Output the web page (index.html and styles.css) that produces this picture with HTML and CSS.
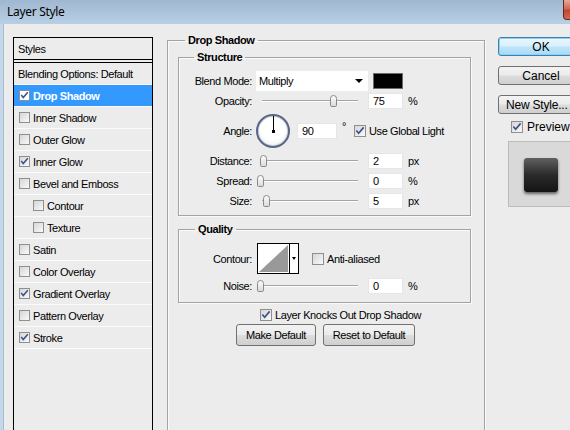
FILE: index.html
```html
<!DOCTYPE html>
<html>
<head>
<meta charset="utf-8">
<title>Layer Style</title>
<link rel="stylesheet" href="styles.css">
</head>
<body>
<div class="window">
  <div class="titlebar">
    <span class="title">Layer Style</span>
    <span class="close"></span>
  </div>
  <div class="content">
    <div class="styles-panel">
      <div class="styles-head">Styles</div>
      <ul class="style-list">
        <li class="item plain">Blending Options: Default</li>
        <li class="item selected"><span class="cb"><svg viewBox="0 0 11 11" width="9" height="9"><path d="M1.5 5 L4 8 L9.5 1.5" fill="none" stroke="#3b4f8c" stroke-width="1.8"/></svg></span>Drop Shadow</li>
        <li class="item"><span class="cb"></span>Inner Shadow</li>
        <li class="item"><span class="cb"></span>Outer Glow</li>
        <li class="item"><span class="cb"><svg viewBox="0 0 11 11" width="9" height="9"><path d="M1.5 5 L4 8 L9.5 1.5" fill="none" stroke="#3b4f8c" stroke-width="1.8"/></svg></span>Inner Glow</li>
        <li class="item"><span class="cb"></span>Bevel and Emboss</li>
        <li class="item sub"><span class="cb"></span>Contour</li>
        <li class="item sub"><span class="cb"></span>Texture</li>
        <li class="item"><span class="cb"></span>Satin</li>
        <li class="item"><span class="cb"></span>Color Overlay</li>
        <li class="item"><span class="cb"><svg viewBox="0 0 11 11" width="9" height="9"><path d="M1.5 5 L4 8 L9.5 1.5" fill="none" stroke="#3b4f8c" stroke-width="1.8"/></svg></span>Gradient Overlay</li>
        <li class="item"><span class="cb"></span>Pattern Overlay</li>
        <li class="item"><span class="cb"><svg viewBox="0 0 11 11" width="9" height="9"><path d="M1.5 5 L4 8 L9.5 1.5" fill="none" stroke="#3b4f8c" stroke-width="1.8"/></svg></span>Stroke</li>
      </ul>
    </div>

    <fieldset class="group main-group">
      <legend class="legend-main">Drop Shadow</legend>

      <fieldset class="group structure">
        <legend class="legend-structure">Structure</legend>
        <div class="row row-blend">
          <span class="lbl">Blend Mode:</span>
          <div class="select"><span>Multiply</span><span class="arrow"></span></div>
          <span class="swatch"></span>
        </div>
        <div class="row row-opacity">
          <span class="lbl">Opacity:</span>
          <div class="slider"><span class="thumb" style="left:73px"></span></div>
          <span class="field">75</span>
          <span class="unit">%</span>
        </div>
        <div class="row row-angle">
          <span class="lbl">Angle:</span>
          <div class="dial"><span class="dial-hand"></span><span class="dial-dot"></span></div>
          <span class="field field-angle">90</span>
          <span class="deg">°</span>
          <span class="cb cb-lg"><svg viewBox="0 0 11 11" width="10" height="10"><path d="M1.5 5 L4 8 L9.5 1.5" fill="none" stroke="#3b4f8c" stroke-width="1.8"/></svg></span>
          <span>Use Global Light</span>
        </div>
        <div class="row row-std">
          <span class="lbl">Distance:</span>
          <div class="slider"><span class="thumb" style="left:3px"></span></div>
          <span class="field">2</span>
          <span class="unit">px</span>
        </div>
        <div class="row row-std">
          <span class="lbl">Spread:</span>
          <div class="slider"><span class="thumb" style="left:0px"></span></div>
          <span class="field">0</span>
          <span class="unit">%</span>
        </div>
        <div class="row row-std">
          <span class="lbl">Size:</span>
          <div class="slider"><span class="thumb" style="left:6px"></span></div>
          <span class="field">5</span>
          <span class="unit">px</span>
        </div>
      </fieldset>

      <fieldset class="group quality">
        <legend class="legend-quality">Quality</legend>
        <div class="row row-contour">
          <span class="lbl">Contour:</span>
          <div class="contour">
            <svg class="contour-curve" viewBox="0 0 31 29" width="31" height="29"><polygon points="1,28 30,1 30,28" fill="#999"/></svg>
            <span class="contour-drop"><span class="arrow small"></span></span>
          </div>
          <span class="cb cb-lg cb-aa"></span>
          <span>Anti-aliased</span>
        </div>
        <div class="row row-noise">
          <span class="lbl">Noise:</span>
          <div class="slider"><span class="thumb" style="left:0px"></span></div>
          <span class="field">0</span>
          <span class="unit">%</span>
        </div>
      </fieldset>

      <div class="knock">
        <span class="cb cb-lg"><svg viewBox="0 0 11 11" width="10" height="10"><path d="M1.5 5 L4 8 L9.5 1.5" fill="none" stroke="#3b4f8c" stroke-width="1.8"/></svg></span>
        <span>Layer Knocks Out Drop Shadow</span>
      </div>
      <div class="btn-row">
        <span class="btn btn-small btn-make">Make Default</span>
        <span class="btn btn-small btn-reset">Reset to Default</span>
      </div>
    </fieldset>

    <div class="side">
      <span class="btn btn-side btn-default">OK</span>
      <span class="btn btn-side">Cancel</span>
      <span class="btn btn-side btn-new">New Style...</span>
      <div class="preview-row">
        <span class="cb cb-lg"><svg viewBox="0 0 11 11" width="10" height="10"><path d="M1.5 5 L4 8 L9.5 1.5" fill="none" stroke="#3b4f8c" stroke-width="1.8"/></svg></span>
        <span>Preview</span>
      </div>
      <div class="preview-box"><span class="preview-sq"></span></div>
    </div>
  </div>
</div>
</body>
</html>
```

FILE: styles.css
```css
* { box-sizing: border-box; }
html, body { margin: 0; padding: 0; }
body {
  width: 570px;
  height: 430px;
  overflow: hidden;
  background: #ececec;
  font-family: "Liberation Sans", Arial, sans-serif;
  font-size: 11px;
  letter-spacing: -0.4px;
  color: #000;
}
.window {
  width: 570px;
  height: 430px;
  display: flex;
  flex-direction: column;
  overflow: hidden;
}
.titlebar {
  height: 24px;
  flex: none;
  display: flex;
  align-items: flex-start;
  overflow: hidden;
  background: linear-gradient(#9fb7d0, #b9cfe6);
}
.title {
  font-family: "Noto Sans", sans-serif;
  font-size: 12px;
  letter-spacing: -0.3px;
  line-height: 16px;
  margin: 4px 0 0 7px;
}
.close {
  flex: none;
  margin-left: auto;
  margin-right: -37px;
  width: 44px;
  height: 20px;
  border: 1px solid #5b2a25;
  border-top: none;
  border-radius: 0 0 4px 4px;
  background: linear-gradient(#e9a898, #d06a55 45%, #c2452f 55%, #d46a4e);
}
.content {
  flex: 1;
  min-height: 0;
  display: flex;
  align-items: flex-start;
  overflow: hidden;
  border-left: 3px solid #c4d7eb;
  box-shadow: inset 1px 0 0 #a9bbcf;
}

/* Styles panel */
.styles-panel {
  flex: none;
  width: 140px;
  height: 400px;
  margin: 13px 0 0 10px;
  border: 1px solid #000;
  border-bottom: none;
}
.styles-head {
  height: 22px;
  padding-left: 4px;
  display: flex;
  align-items: center;
  border-bottom: 1px solid #000;
}
.style-list {
  list-style: none;
  margin: 2px 0 0;
  padding: 0;
  border-top: 1px solid #000;
}
.item {
  height: 22px;
  display: flex;
  align-items: center;
  padding-left: 5px;
  border-bottom: 1px solid #fbfbfb;
}
.item.plain { padding-left: 4px; }
.item.sub { padding-left: 19px; }
.item.selected {
  background: #3399ff;
  color: #fff;
  font-weight: bold;
}
.item.selected .cb { background: #fff; }

.cb {
  flex: none;
  width: 11px;
  height: 11px;
  margin-right: 3px;
  border: 1px solid #8e8f8f;
  background: linear-gradient(135deg, #d6d6d6, #f9f9f9);
  display: inline-flex;
  align-items: center;
  justify-content: center;
}
.cb.cb-lg {
  width: 12px;
  height: 12px;
}

/* Group boxes */
fieldset.group {
  margin: 0;
  padding: 0;
  min-width: 0;
  border: 1px solid #a3a3a3;
  box-shadow: inset 1px 1px 0 #fafafa, 1px 1px 0 #fafafa;
}
fieldset.group > legend {
  padding: 0 3px;
  font-weight: bold;
  line-height: 13px;
}
fieldset.main-group {
  flex: none;
  width: 318px;
  height: 420px;
  margin: 10px 0 0 14px;
}
fieldset.group > .legend-main { margin-left: 17px; }
fieldset.structure {
  width: 293px;
  margin: 4px 0 0 10px;
  padding: 6px 0 4px;
}
fieldset.group > .legend-structure { margin-left: 15px; }
fieldset.quality {
  width: 293px;
  margin: 7px 0 0 10px;
  padding: 7px 0 7px;
}
fieldset.group > .legend-quality { margin-left: 16px; }

.row {
  display: flex;
  align-items: center;
}
.lbl {
  flex: none;
  width: 73px;
  margin-right: 4px;
  text-align: right;
}
.row-blend { height: 22px; }
.row-opacity { height: 18px; }
.row-angle { height: 41px; }
.row-std { height: 20px; }
.row-contour { height: 31px; }
.row-noise { height: 18px; margin-top: 3px; }

.select {
  flex: none;
  width: 112px;
  height: 20px;
  background: #fff;
  display: flex;
  align-items: center;
  justify-content: space-between;
  padding: 0 5px 0 3px;
}
.arrow {
  width: 0;
  height: 0;
  border-left: 4px solid transparent;
  border-right: 4px solid transparent;
  border-top: 4px solid #000;
}
.arrow.small {
  border-left-width: 2px;
  border-right-width: 2px;
  border-top-width: 3px;
}
.swatch {
  flex: none;
  width: 30px;
  height: 16px;
  margin-left: 5px;
  background: #000;
  border: 1px solid #6a6a6a;
}

.slider {
  position: relative;
  flex: none;
  width: 103px;
  height: 14px;
  margin-left: 1px;
}
.slider::before {
  content: "";
  position: absolute;
  left: 5px;
  right: 2px;
  top: 6px;
  height: 1px;
  background: #a4a4a4;
  box-shadow: 0 1px 0 #fff;
}
.thumb {
  position: absolute;
  top: 1px;
  width: 7px;
  height: 12px;
  border: 1px solid #8a8a8a;
  border-radius: 4px 4px 2px 2px;
  background: linear-gradient(#fdfdfd, #dadada);
}
.field {
  flex: none;
  width: 35px;
  height: 16px;
  margin-left: 8px;
  padding-left: 4px;
  background: #fff;
  border: 1px solid #e6e6e6;
  display: flex;
  align-items: center;
}
.unit { margin-left: 5px; }

.dial {
  position: relative;
  flex: none;
  width: 34px;
  height: 34px;
  border-radius: 50%;
  border: 2px solid #5a6684;
  background: radial-gradient(circle at 50% 40%, #ffffff 50%, #e2e6ee);
  box-shadow: inset 0 0 0 1px #c9d0de;
}
.dial-hand {
  position: absolute;
  left: 14.5px;
  top: 0;
  width: 1.5px;
  height: 15px;
  background: #000;
}
.dial-dot {
  position: absolute;
  left: 14px;
  top: 14px;
  width: 3px;
  height: 3px;
  background: #000;
}
.field.field-angle {
  width: 40px;
  margin-left: 7px;
}
.deg {
  margin-left: 5px;
  margin-right: 8px;
  align-self: flex-start;
  margin-top: 10px;
}

.contour {
  flex: none;
  display: flex;
  width: 42px;
  height: 31px;
  border: 1px solid #000;
  background: #fff;
  margin-left: 1px;
}
.contour-curve { flex: none; }
.contour-drop {
  flex: none;
  width: 9px;
  border-left: 1px solid #000;
  background: #fff;
  display: flex;
  align-items: center;
  justify-content: center;
}
.cb.cb-aa { margin-left: 13px; margin-right: 3px; }

.knock {
  display: flex;
  align-items: center;
  height: 14px;
  margin: 5px 0 0 92px;
}
.btn-row {
  display: flex;
  gap: 7px;
  margin: 2px 0 0 68px;
}
.btn {
  flex: none;
  display: flex;
  align-items: center;
  justify-content: center;
  border: 1px solid #707070;
  border-radius: 3px;
  background: linear-gradient(#f3f3f3, #ebebeb 48%, #dddddd 52%, #cfcfcf);
}
.btn-small { height: 22px; }
.btn-make { width: 80px; }
.btn-reset { width: 92px; }

.side {
  flex: none;
  width: 86px;
  margin: 13px 0 0 13px;
  display: flex;
  flex-direction: column;
}
.btn-side {
  height: 19px;
  font-size: 12px;
  letter-spacing: 0;
  margin-bottom: 10px;
}
.btn-new {
  justify-content: flex-start;
  padding-left: 7px;
  letter-spacing: -0.2px;
  margin-bottom: 0;
}
.btn-default {
  border-color: #3c7fb1;
  background: linear-gradient(#eaf6fd, #d9f0fc 48%, #bee6fd 52%, #a7d9f5);
  box-shadow: inset 0 0 0 1px #8fd0f3;
}
.preview-row {
  display: flex;
  align-items: center;
  height: 16px;
  margin: 5px 0 0 13px;
  font-size: 12px;
  letter-spacing: 0;
}
.preview-row .cb { margin-right: 4px; }
.preview-box {
  width: 76px;
  height: 66px;
  margin: 6px 0 0 10px;
  background: #d9d9d9;
  border: 1px solid #bcbcbc;
  padding: 16px 0 0 15px;
}
.preview-sq {
  display: block;
  width: 34px;
  height: 34px;
  border-radius: 3px;
  background: linear-gradient(#606060, #2a2a2a 50%, #151515);
  box-shadow: 0 2px 3px rgba(0, 0, 0, 0.55);
}
```
